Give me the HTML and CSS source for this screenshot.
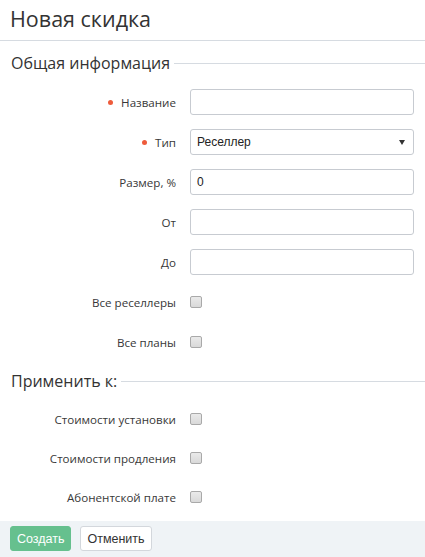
FILE: index.html
```html
<!DOCTYPE html>
<html lang="ru">
<head>
<meta charset="utf-8">
<link rel="stylesheet" href="styles.css">
</head>
<body>
<div class="page">
  <h1 class="title">Новая скидка</h1>
  <div class="legend"><span class="legend-text">Общая информация</span><span class="legend-line"></span></div>
  <div class="rows">
    <div class="row"><label class="lbl req">Название</label><input class="inp" type="text"></div>
    <div class="row"><label class="lbl req">Тип</label><div class="sel"><span>Реселлер</span><span class="arrow"></span></div></div>
    <div class="row"><label class="lbl">Размер, %</label><input class="inp" type="text" value="0"></div>
    <div class="row"><label class="lbl">От</label><input class="inp" type="text"></div>
    <div class="row"><label class="lbl">До</label><input class="inp" type="text"></div>
    <div class="row"><label class="lbl">Все реселлеры</label><span class="chk"></span></div>
    <div class="row"><label class="lbl">Все планы</label><span class="chk"></span></div>
  </div>
  <div class="legend"><span class="legend-text">Применить к:</span><span class="legend-line"></span></div>
  <div class="rows rows2">
    <div class="row"><label class="lbl">Стоимости установки</label><span class="chk"></span></div>
    <div class="row"><label class="lbl">Стоимости продления</label><span class="chk"></span></div>
    <div class="row"><label class="lbl">Абонентской плате</label><span class="chk"></span></div>
  </div>
  <div class="footer">
    <button class="btn btn-primary">Создать</button>
    <button class="btn btn-default">Отменить</button>
  </div>
</div>
</body>
</html>
```
FILE: styles.css
```css
html, body {
  margin: 0;
  padding: 0;
  background: #fff;
}
.page {
  font-family: "Open Sans", sans-serif;
  color: #333;
  height: 557px;
  display: flex;
  flex-direction: column;
}
.page > * {
  flex-shrink: 0;
}
.title {
  margin: 0;
  height: 40px;
  border-bottom: 1px solid #d6dbe1;
  font-size: 21.5px;
  font-weight: 400;
  line-height: 38px;
  padding-left: 10px;
  color: #333;
}
.legend {
  display: flex;
  align-items: center;
  height: 24px;
  margin-top: 10px;
  padding-left: 11px;
}
.legend-text {
  font-size: 16px;
  line-height: 24px;
  margin-right: 4px;
}
.legend-line {
  flex: 1;
  border-top: 1px solid #d6dbe1;
}
.rows {
  display: flex;
  flex-direction: column;
  gap: 14px;
  margin-top: 14px;
  margin-bottom: 4px;
  padding-right: 11px;
}
.rows2 {
  gap: 13px;
  margin-top: 13px;
  margin-bottom: 8px;
}
.row {
  display: flex;
  align-items: center;
  height: 26px;
}
.lbl {
  width: 176px;
  padding-right: 14px;
  text-align: right;
  font-size: 11.6px;
  color: #383838;
  flex: none;
}
.req::before {
  content: "";
  display: inline-block;
  width: 5px;
  height: 5px;
  border-radius: 50%;
  background: #ee5b3b;
  margin-right: 8px;
  vertical-align: 2px;
}
.inp, .sel {
  flex: 1;
  box-sizing: border-box;
  height: 26px;
  border: 1px solid #c7cbd1;
  border-radius: 3px;
  padding: 0 6px;
  font-family: "Liberation Sans", Arial, sans-serif;
  font-size: 12px;
  color: #222;
  outline: none;
  margin: 0;
}
.sel {
  display: flex;
  align-items: center;
  justify-content: space-between;
  padding-right: 8px;
}
.arrow {
  width: 0;
  height: 0;
  border-left: 3px solid transparent;
  border-right: 3px solid transparent;
  border-top: 5px solid #333;
}
.chk {
  box-sizing: border-box;
  width: 12px;
  height: 12px;
  border: 1px solid #a9a9a9;
  border-radius: 2px;
  background: linear-gradient(#eaeaea, #d9d9d9);
  flex: none;
}
.footer {
  margin-top: auto;
  background: #eff3f6;
  height: 36px;
  box-sizing: border-box;
  padding: 5px 10px;
  display: flex;
  gap: 9px;
}
.btn {
  height: 25px;
  box-sizing: border-box;
  border-radius: 3px;
  font-family: "Liberation Sans", Arial, sans-serif;
  font-size: 12.5px;
  padding: 0 6px;
  margin: 0;
}
.btn-primary {
  background: #66c08e;
  border: 1px solid #66c08e;
  color: #fff;
  width: 61px;
}
.btn-default {
  background: #fff;
  border: 1px solid #d3d7dc;
  color: #333;
  width: 72px;
}
```
